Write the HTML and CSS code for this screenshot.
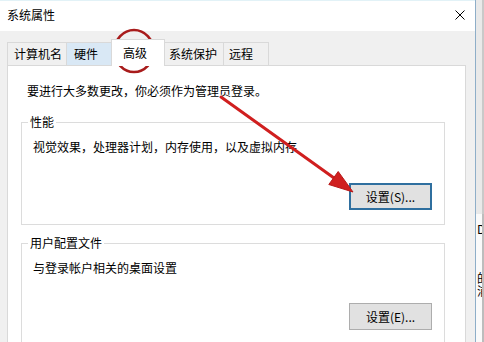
FILE: index.html
```html
<!DOCTYPE html>
<html lang="zh-CN">
<head>
<meta charset="utf-8">
<title>系统属性</title>
<link rel="stylesheet" href="styles.css">
</head>
<body>
<div class="screen">
  <div class="window">
    <div class="titlebar">
      <span class="title">系统属性</span>
      <svg class="close" width="10" height="10" viewBox="0 0 10 10"><path d="M0.5 0.5L9.5 9.5M9.5 0.5L0.5 9.5" stroke="#000" stroke-width="1" fill="none"/></svg>
    </div>
    <div class="body">
      <div class="tabs">
        <div class="tab t-name">计算机名</div>
        <div class="tab t-hw hover">硬件</div>
        <div class="tab t-adv active">高级</div>
        <div class="tab t-sys">系统保护</div>
        <div class="tab t-remote">远程</div>
      </div>
      <div class="panel">
        <p class="notice">要进行大多数更改，你必须作为管理员登录。</p>
        <fieldset class="group g-perf">
          <legend>性能</legend>
          <p class="desc">视觉效果，处理器计划，内存使用，以及虚拟内存</p>
          <div class="actions actions-perf"><button class="btn default">设置(S)...</button></div>
        </fieldset>
        <fieldset class="group g-user">
          <legend>用户配置文件</legend>
          <p class="desc">与登录帐户相关的桌面设置</p>
          <div class="actions actions-user"><button class="btn">设置(E)...</button></div>
        </fieldset>
      </div>
    </div>
  </div>
  <div class="frame-edge"></div>
  <div class="behind">
    <div class="behind-top"></div>
    <div class="behind-page">
      <div class="frag f1">D</div>
      <div class="frag f2">的</div>
      <div class="frag f3">浦</div>
    </div>
  </div>
  <svg class="annot" width="484" height="342" viewBox="0 0 484 342">
    <ellipse cx="134" cy="51" rx="19.5" ry="21" fill="none" stroke="#a81b1b" stroke-width="2.6"/>
    <line x1="221" y1="97" x2="334" y2="178" stroke="#d01f1f" stroke-width="3" stroke-linecap="round"/>
    <polygon points="353,192 328.8,184.5 338.2,171.5" fill="#d01f1f" stroke="#b81818" stroke-width="1" stroke-linejoin="round"/>
  </svg>
</div>
</body>
</html>
```
FILE: styles.css
```css
html, body {
  margin: 0;
  padding: 0;
}
body {
  font-family: "Noto Sans CJK SC", "Noto Sans", sans-serif;
  font-size: 12px;
  color: #000;
  background: #f0f0f0;
}
.screen {
  position: relative;
  display: flex;
  width: 484px;
  height: 342px;
  overflow: hidden;
}
.window {
  width: 475px;
  display: flex;
  flex-direction: column;
  background: #f0f0f0;
}
.titlebar {
  height: 31px;
  flex: none;
  background: #fff;
  box-shadow: inset 0 1px 0 #e2f2f7;
  display: flex;
  align-items: center;
  justify-content: space-between;
  padding: 0 10px 0 7px;
}
.title {
  line-height: 16px;
  margin-top: -1px;
}
.close {
  display: block;
  margin-top: -1px;
}
.body {
  flex: 1;
  display: flex;
  flex-direction: column;
  padding: 0 9px 0 7px;
  min-height: 0;
}
.tabs {
  display: flex;
  align-items: flex-end;
  margin-top: 8px;
  height: 26px;
  position: relative;
  z-index: 2;
}
.tab {
  box-sizing: border-box;
  height: 23px;
  line-height: 21px;
  border: 1px solid #d9d9d9;
  border-bottom: none;
  background: #f0f0f0;
  white-space: nowrap;
}
.t-name { width: 60px; padding-left: 6px; }
.t-hw { width: 47px; padding-left: 7px; margin-left: -1px; }
.t-adv { width: 54px; padding-left: 11px; margin-left: -2px; margin-right: -2px; }
.t-sys { width: 61px; padding-left: 5px; }
.t-remote { width: 46px; padding-left: 5px; margin-left: -1px; }
.tab.hover {
  background: #d9e8f5;
}
.tab.active {
  position: relative;
  z-index: 3;
  height: 27px;
  line-height: 26px;
  margin-bottom: -1px;
  background: #fff;
}
.panel {
  flex: 1;
  background: #fff;
  border: 1px solid #d9d9d9;
  border-bottom: none;
  padding: 17px 20px 0 13px;
  display: flex;
  flex-direction: column;
  min-height: 0;
}
.notice {
  margin: 0 0 0 6px;
  line-height: 16px;
}
.group {
  margin: 0;
  border: 1px solid #dcdcdc;
  padding: 0 12px 14px 0;
  min-width: 0;
  flex: none;
}
.g-perf { margin-top: 15px; }
.g-user { margin-top: 10px; }
.group legend {
  margin-left: 6px;
  padding: 0 2px;
  line-height: 16px;
}
.desc {
  margin: 9px 0 0 11px;
  line-height: 16px;
}
.actions {
  display: flex;
  justify-content: flex-end;
}
.actions-perf { margin-top: 28px; }
.actions-user { margin-top: 27px; }
.btn {
  box-sizing: border-box;
  width: 83px;
  height: 27px;
  padding: 0;
  font: inherit;
  font-size: 12px;
  line-height: 16px;
  color: #000;
  background: #e1e1e1;
  border: 1px solid #adadad;
}
.btn.default {
  border: 2px solid #2f6f9f;
}
.frame-edge {
  width: 1px;
  flex: none;
  background: #8eaec8;
}
.behind {
  width: 8px;
  flex: none;
  display: flex;
  flex-direction: column;
  background: #e9e9e9;
}
.behind-top {
  height: 214px;
  flex: none;
  border-right: 2px solid #c9c9c9;
}
.behind-page {
  flex: 1;
  width: 6px;
  overflow: hidden;
  background: #fafafa;
  border-right: 2px solid #bdbdbd;
  font-size: 12px;
  line-height: 13px;
}
.frag {
  white-space: nowrap;
  margin-left: 1px;
}
.f1 { margin-top: 8px; }
.f2 { margin-top: 36px; }
.f3 { margin-top: 0; }
.annot {
  position: absolute;
  left: 0;
  top: 0;
  pointer-events: none;
}
```
